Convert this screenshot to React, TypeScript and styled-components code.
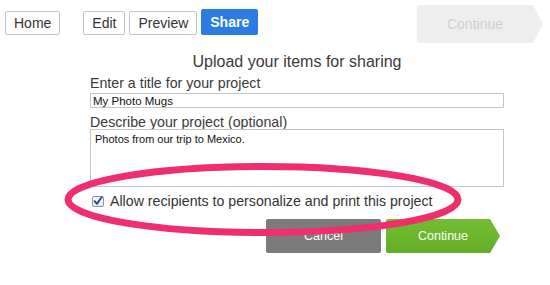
import styled, { createGlobalStyle } from "styled-components";

const GlobalStyle = createGlobalStyle`
    html, body {
        margin: 0;
        padding: 0;
        background: #ffffff;
        font-family: "Liberation Sans", Arial, sans-serif;
        color: #333333;
    }
`;

function App() {
    return (
        <Page>
            <GlobalStyle />
            <TopBar>
                <NavButton>Home</NavButton>
                <EditGroup>
                    <NavButton>Edit</NavButton>
                    <NavButton>Preview</NavButton>
                    <ShareButton>Share</ShareButton>
                </EditGroup>
                <StepButton disabled>Continue</StepButton>
            </TopBar>

            <Form>
                <Heading>Upload your items for sharing</Heading>
                <FieldLabel>Enter a title for your project</FieldLabel>
                <TitleInput defaultValue="My Photo Mugs" />
                <FieldLabel $gap={8}>Describe your project (optional)</FieldLabel>
                <DescInput defaultValue="Photos from our trip to Mexico." />
                <CheckRow>
                    <CheckBox>
                        <svg width="10" height="10" viewBox="0 0 10 10">
                            <path d="M1.6 5.2 L4 7.8 L8.6 1.2" fill="none" stroke="#24478a" strokeWidth="1.9" strokeLinecap="round" strokeLinejoin="round" />
                        </svg>
                    </CheckBox>
                    Allow recipients to personalize and print this project
                </CheckRow>
                <Actions>
                    <CancelButton>Cancel</CancelButton>
                    <ContinueButton>Continue</ContinueButton>
                </Actions>
            </Form>

            <Highlight width="550" height="285" viewBox="0 0 550 285">
                <ellipse cx="263" cy="199.5" rx="195" ry="33" fill="none" stroke="#ee2f6b" strokeWidth="7" />
            </Highlight>
        </Page>
    );
}

export default App;

const Page = styled.div`
    position: relative;
    width: 550px;
    height: 285px;
    overflow: hidden;
`;

const TopBar = styled.div`
    display: flex;
    align-items: flex-start;
    padding: 5px 7px 0 5px;
    height: 38px;
`;

const EditGroup = styled.div`
    display: flex;
    align-items: flex-end;
    gap: 4px;
    margin-left: 23px;
    margin-top: 4px;
`;

const NavButton = styled.button`
    height: 24px;
    margin-top: 6px;
    padding: 0 8px;
    border: 1px solid #c4c4c4;
    border-radius: 2px;
    background: #ffffff;
    font-family: "Liberation Sans", Arial, sans-serif;
    font-size: 14px;
    color: #333333;
    ${EditGroup} & {
        margin-top: 0;
    }
`;

const ShareButton = styled.button`
    height: 26px;
    padding: 0 9px;
    border: none;
    border-radius: 2px;
    background: #2b7be0;
    font-family: "Liberation Sans", Arial, sans-serif;
    font-size: 14px;
    font-weight: bold;
    color: #ffffff;
`;

const Arrow = styled.button`
    border: none;
    padding: 0 10px 0 0;
    font-family: "Liberation Sans", Arial, sans-serif;
    clip-path: polygon(0 0, calc(100% - 10px) 0, 100% 50%, calc(100% - 10px) 100%, 0 100%);
`;

const StepButton = styled(Arrow)`
    margin-left: auto;
    width: 126px;
    height: 38px;
    border-radius: 2px 0 0 2px;
    background: #eeeeee;
    color: #cdcdcd;
    font-size: 14px;
`;

const Form = styled.div`
    display: flex;
    flex-direction: column;
    width: 414px;
    margin-left: 90px;
    margin-top: 10px;
`;

const Heading = styled.div`
    text-align: center;
    font-size: 16px;
    line-height: 18px;
    color: #3a3a3a;
`;

const FieldLabel = styled.div<{ $gap?: number }>`
    margin-top: ${(p) => p.$gap ?? 6}px;
    font-size: 14.2px;
    line-height: 13px;
    color: #3a3a3a;
`;

const TitleInput = styled.input`
    box-sizing: border-box;
    width: 100%;
    height: 15px;
    margin-top: 3px;
    padding: 0 2px;
    border: 1px solid #c6c6c6;
    font-family: "Liberation Sans", Arial, sans-serif;
    font-size: 11.5px;
    color: #111111;
    outline: none;
`;

const DescInput = styled.textarea`
    box-sizing: border-box;
    width: 100%;
    height: 58px;
    margin: 0;
    padding: 3px 4px;
    border: 1px solid #c6c6c6;
    resize: none;
    font-family: "Liberation Sans", Arial, sans-serif;
    font-size: 11px;
    line-height: 13px;
    color: #111111;
    outline: none;
`;

const CheckRow = styled.label`
    display: flex;
    align-items: center;
    gap: 6px;
    margin-top: 7px;
    padding-left: 2px;
    font-size: 14.2px;
    line-height: 14px;
    color: #333333;
`;

const CheckBox = styled.span`
    box-sizing: border-box;
    display: flex;
    align-items: center;
    justify-content: center;
    width: 12px;
    height: 11px;
    border: 1px solid #8c95a6;
    border-radius: 2px;
    background: linear-gradient(#ffffff, #e4e8ef);
`;

const Actions = styled.div`
    display: flex;
    justify-content: flex-end;
    gap: 5px;
    margin-top: 11px;
    padding-right: 4px;
`;

const CancelButton = styled.button`
    width: 115px;
    height: 34px;
    border: none;
    border-radius: 2px;
    background: #7b7b7b;
    font-family: "Liberation Sans", Arial, sans-serif;
    font-size: 12.5px;
    color: #ffffff;
`;

const ContinueButton = styled(Arrow)`
    width: 114px;
    height: 34px;
    padding: 0;
    border-radius: 2px 0 0 2px;
    background: linear-gradient(#72bd33, #64ae27);
    font-size: 12.5px;
    color: #ffffff;
`;

const Highlight = styled.svg`
    position: absolute;
    left: 0;
    top: 0;
    pointer-events: none;
`;
